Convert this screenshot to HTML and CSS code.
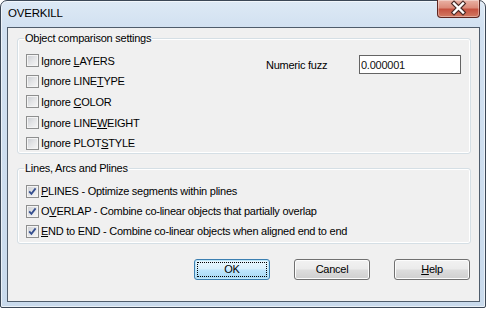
FILE: index.html
```html
<!DOCTYPE html>
<html>
    <head>
        <title>OVERKILL</title>
        <link rel="stylesheet" href="styles.css">
    </head>
    <body>
        <div class="window">
            <div class="titlebar">
                <span class="title">OVERKILL</span>
                <div class="close">
                    <svg width="41" height="16" viewBox="0 0 41 16">
                        <path d="M16 3.5 L25 12.5 M25 3.5 L16 12.5" stroke="#4a2a26" stroke-width="4.6" stroke-linecap="square"/>
                        <path d="M16 3.5 L25 12.5 M25 3.5 L16 12.5" stroke="#fff" stroke-width="2.4" stroke-linecap="square"/>
                    </svg>
                </div>
            </div>
            <div class="client">
                <fieldset class="group group-compare">
                    <legend>Object comparison settings</legend>
                    <div class="checks">
                        <label class="check"><span class="box"></span><span>Ignore <u>L</u>AYERS</span></label>
                        <label class="check"><span class="box"></span><span>Ignore LINE<u>T</u>YPE</span></label>
                        <label class="check"><span class="box"></span><span>Ignore <u>C</u>OLOR</span></label>
                        <label class="check"><span class="box"></span><span>Ignore LINE<u>W</u>EIGHT</span></label>
                        <label class="check"><span class="box"></span><span>Ignore PLOT<u>S</u>TYLE</span></label>
                    </div>
                    <div class="fuzz">
                        <span class="fuzz-label">Numeric fuzz</span>
                        <input class="fuzz-input" type="text" value="0.000001">
                    </div>
                </fieldset>
                <fieldset class="group group-lines">
                    <legend>Lines, Arcs and Plines</legend>
                    <div class="checks">
                        <label class="check"><span class="box checked"></span><span><u>P</u>LINES - Optimize segments within plines</span></label>
                        <label class="check"><span class="box checked"></span><span>O<u>V</u>ERLAP - Combine co-linear objects that partially overlap</span></label>
                        <label class="check"><span class="box checked"></span><span><u>E</u>ND to END - Combine co-linear objects when aligned end to end</span></label>
                    </div>
                </fieldset>
                <div class="buttons">
                    <button class="btn btn-default"><span class="focus">OK</span></button>
                    <button class="btn">Cancel</button>
                    <button class="btn"><u>H</u>elp</button>
                </div>
            </div>
        </div>
    </body>
</html>
```

FILE: styles.css
```css
html, body {
    margin: 0;
    padding: 0;
    background: #fff;
    font-family: 'Liberation Sans', Arial, sans-serif;
    font-size: 11px;
    letter-spacing: -0.25px;
    color: #000;
}
.window {
    box-sizing: border-box;
    width: 486px;
    height: 308px;
    border: 1px solid #3b4756;
    border-radius: 7px 7px 2px 2px;
    padding: 0 5px 5px 6px;
    display: flex;
    flex-direction: column;
    background: linear-gradient(180deg, #dde9f5 0, #d2e1f1 26px, #c9daec 100%);
    box-shadow: inset 0 0 0 1px rgba(255,255,255,0.6);
}
.titlebar {
    height: 26px;
    display: flex;
    justify-content: space-between;
    align-items: flex-start;
}
.title {
    padding: 6px 0 0 1px;
    font-size: 11.5px;
    letter-spacing: -0.2px;
    color: #000;
}
.close {
    box-sizing: border-box;
    width: 43px;
    height: 18px;
    margin-top: -1px;
    border: 1px solid #5e2620;
    border-top: none;
    border-radius: 0 0 4px 4px;
    background: linear-gradient(180deg, #eab2a5 0%, #dc8b7a 45%, #c65240 55%, #d27a63 100%);
    box-shadow: inset 0 0 0 1px rgba(255,255,255,0.35);
}
.close svg {
    display: block;
}
.client {
    flex: 1;
    border: 1px solid #4f5c6b;
    background: #f0f0f0;
    display: flex;
    flex-direction: column;
}
.group {
    margin: 0 8px 0 9px;
    border: 1px solid #d5dfe5;
    border-radius: 3px;
    box-shadow: inset 0 0 0 1px #fff;
    display: flex;
}
.group legend {
    margin-left: -2px;
    padding: 0 1px;
    line-height: 13px;
}
.group-compare {
    margin-top: 4px;
    padding: 7px 0 1px 8px;
}
.group-lines {
    margin-top: 8px;
    padding: 8px 0 3px 8px;
}
.checks {
    display: flex;
    flex-direction: column;
}
.group-compare .checks {
    width: 240px;
    gap: 3.7px;
}
.group-lines .checks {
    gap: 3px;
}
.check {
    height: 17px;
    display: flex;
    align-items: center;
    gap: 2px;
    white-space: nowrap;
}
.check u, .btn u {
    text-underline-offset: 1px;
}
.box {
    box-sizing: border-box;
    width: 13px;
    height: 13px;
    border: 1px solid #8e8f8f;
    background: linear-gradient(135deg, #c9ccd1 0%, #e4e5e7 50%, #f7f7f7 100%);
    box-shadow: inset 0 0 0 1px #f4f4f4;
    flex: none;
}
.box.checked {
    background-image: url("data:image/svg+xml;utf8,<svg xmlns='http://www.w3.org/2000/svg' width='11' height='11'><path d='M2.2 5.4 L4.4 7.8 L8.6 2.4' fill='none' stroke='%23354f8f' stroke-width='1.8'/></svg>"), linear-gradient(135deg, #c9ccd1 0%, #e4e5e7 50%, #f7f7f7 100%);
}
.fuzz {
    display: flex;
    align-items: center;
    align-self: flex-start;
    margin-top: 3px;
}
.fuzz-label {
    width: 93px;
}
.fuzz-input {
    box-sizing: border-box;
    width: 102px;
    height: 19px;
    border: 1px solid #646464;
    padding: 0 0 0 1px;
    margin: 0;
    background: #fff;
    font-family: 'Liberation Sans', Arial, sans-serif;
    font-size: 11px;
    letter-spacing: -0.25px;
    color: #111;
    outline: none;
}
.buttons {
    margin-top: 15px;
    padding-right: 9px;
    display: flex;
    justify-content: flex-end;
    gap: 24px;
}
.btn {
    box-sizing: border-box;
    width: 76px;
    height: 21px;
    padding: 0;
    border: 1px solid #707070;
    border-radius: 3px;
    background: linear-gradient(180deg, #f2f2f2 0%, #ebebeb 48%, #dddddd 52%, #cfcfcf 100%);
    box-shadow: inset 0 0 0 1px #fcfcfc;
    font-family: 'Liberation Sans', Arial, sans-serif;
    font-size: 11px;
    letter-spacing: -0.25px;
    color: #000;
}
.btn-default {
    border-color: #3c7fb1;
    background: linear-gradient(180deg, #eaf6fd 0%, #d9f0fc 48%, #bee6fd 52%, #a7d9f5 100%);
    box-shadow: inset 0 0 0 1px #bfe7f8;
    padding: 2px;
}
.focus {
    box-sizing: border-box;
    display: flex;
    align-items: center;
    justify-content: center;
    width: 100%;
    height: 100%;
    border: 1px dotted #000;
}
```
